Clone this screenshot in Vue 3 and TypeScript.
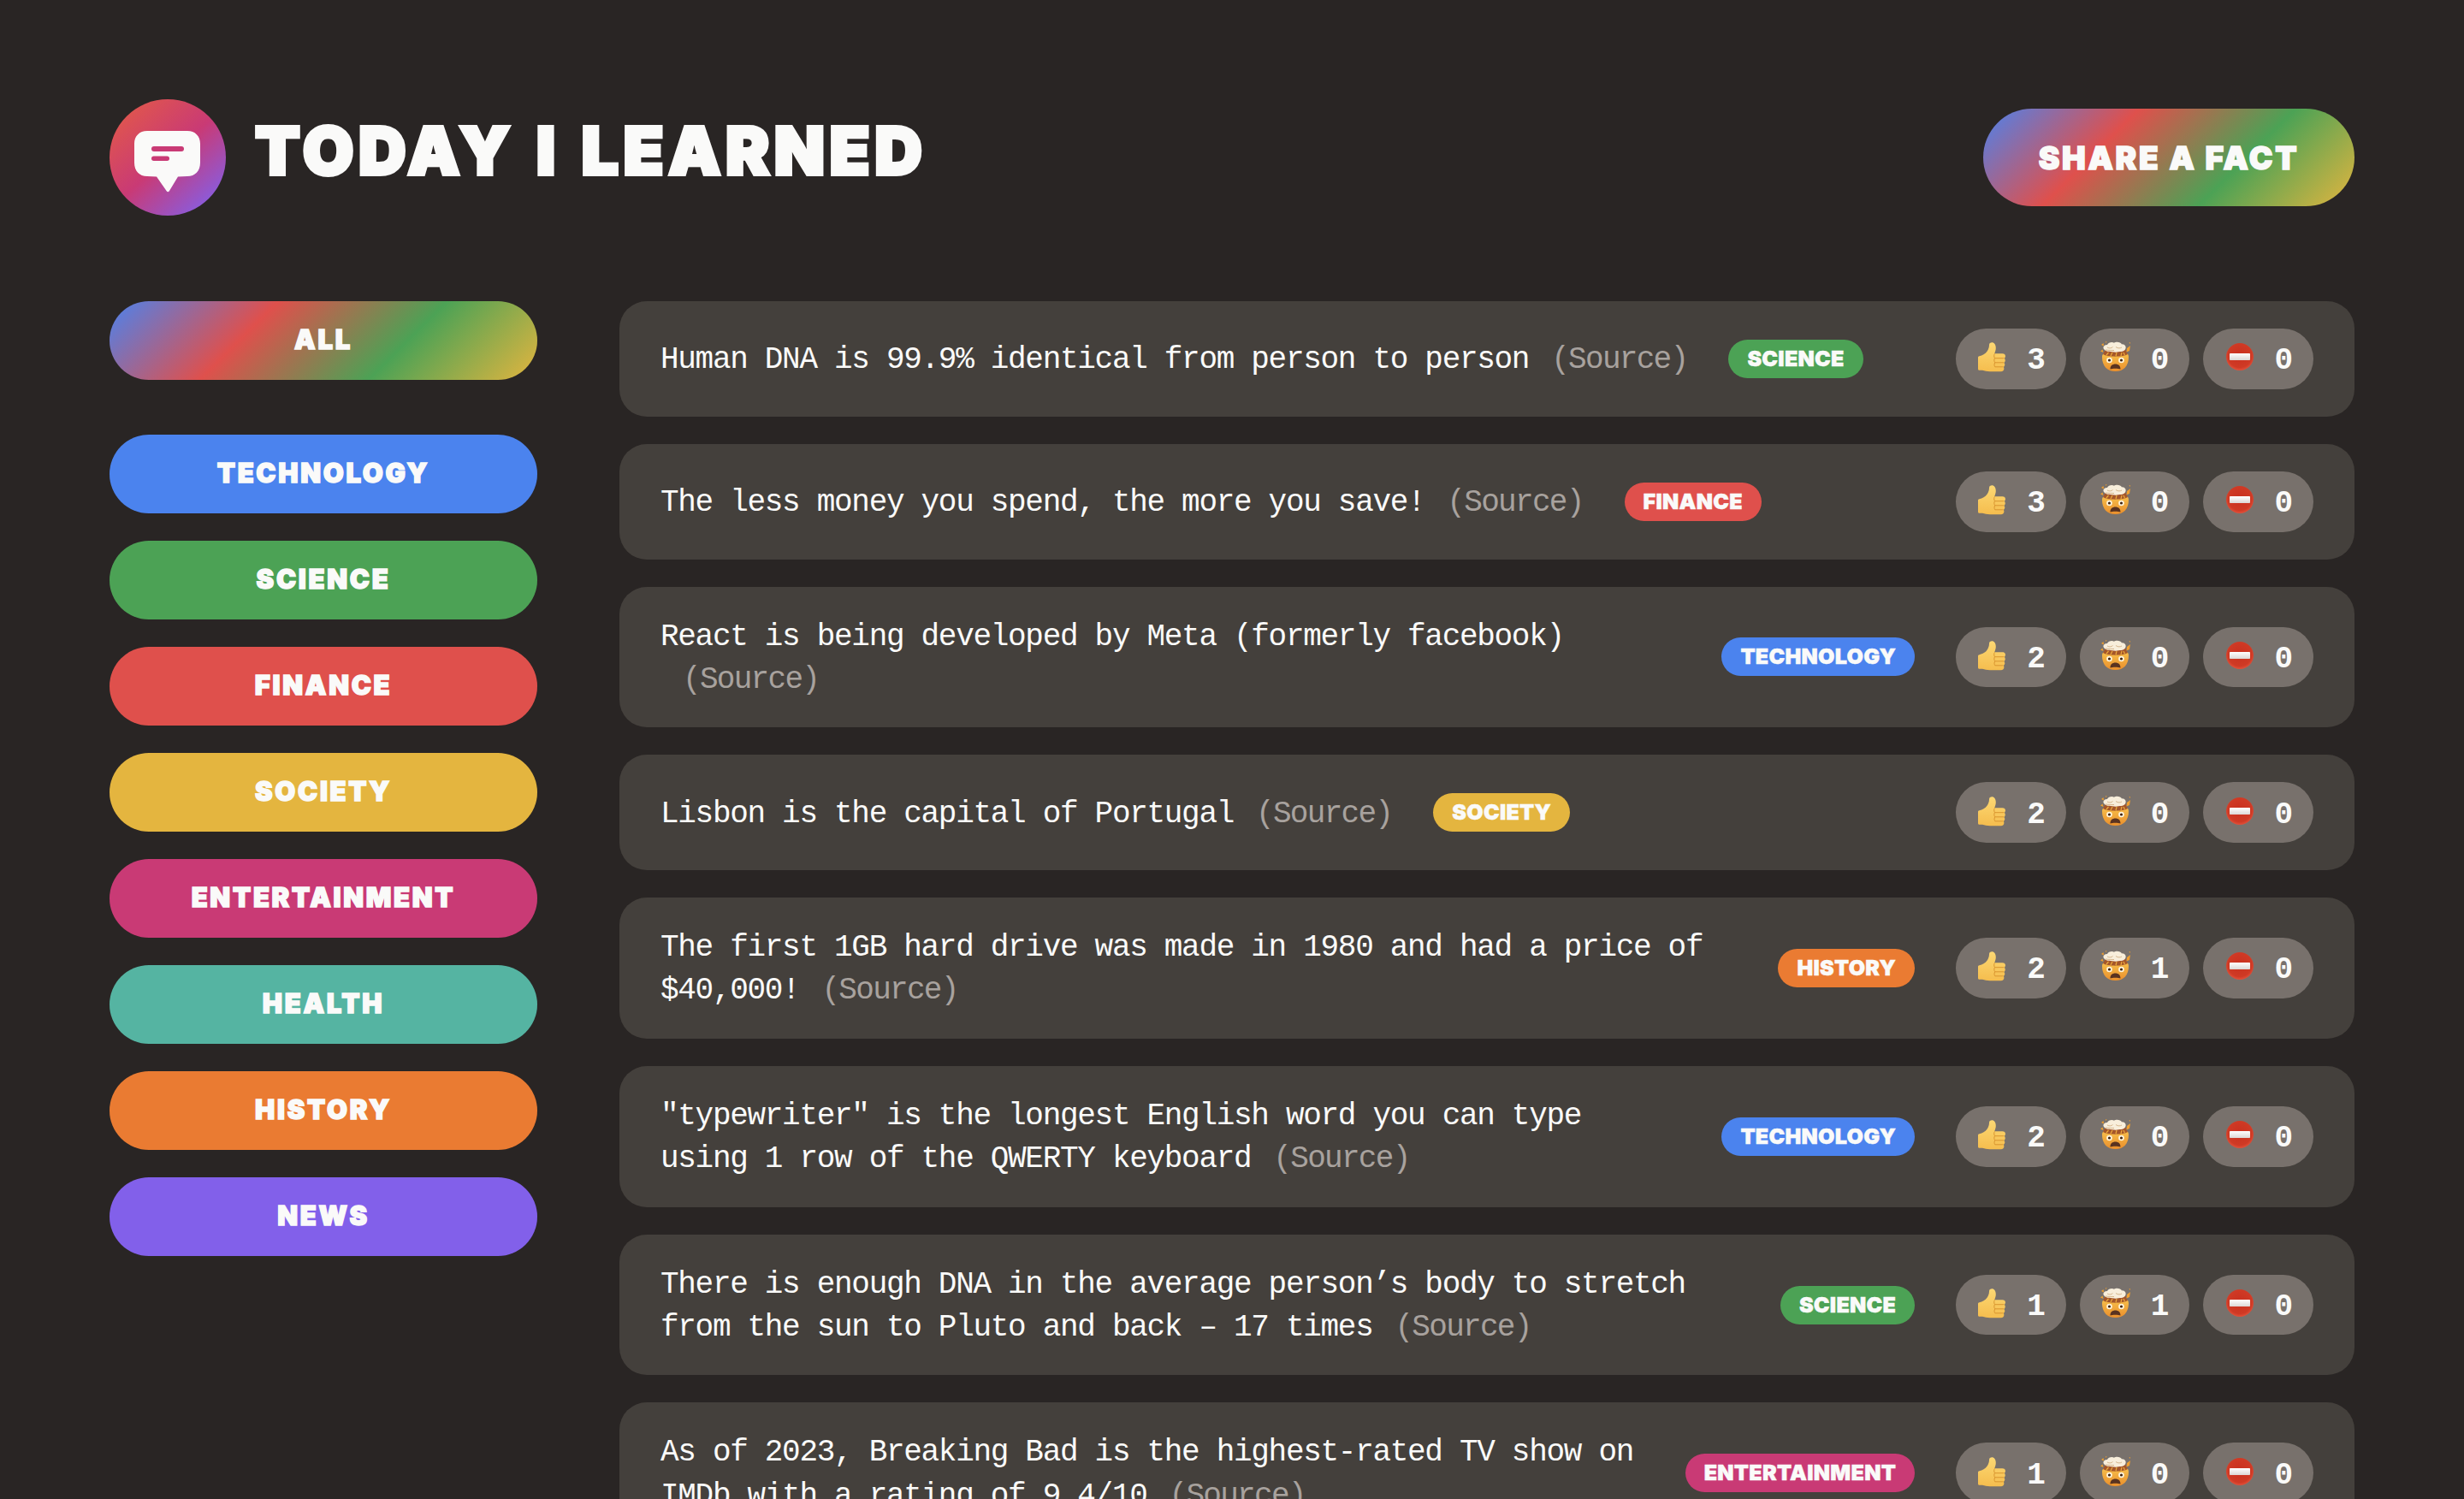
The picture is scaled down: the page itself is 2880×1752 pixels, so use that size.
<script setup lang="ts">
interface Fact {
  text: string
  category: string
  likes: number
  mindblown: number
  disputed: number
}

const CATEGORIES = [
  { name: 'technology', color: '#4b83ee' },
  { name: 'science', color: '#4ca255' },
  { name: 'finance', color: '#df504c' },
  { name: 'society', color: '#e4b53f' },
  { name: 'entertainment', color: '#c93a75' },
  { name: 'health', color: '#55b4a2' },
  { name: 'history', color: '#ea7b32' },
  { name: 'news', color: '#8260ea' },
]

const facts: Fact[] = [
  { text: 'Human DNA is 99.9% identical from person to person', category: 'science', likes: 3, mindblown: 0, disputed: 0 },
  { text: 'The less money you spend, the more you save!', category: 'finance', likes: 3, mindblown: 0, disputed: 0 },
  { text: 'React is being developed by Meta (formerly facebook)', category: 'technology', likes: 2, mindblown: 0, disputed: 0 },
  { text: 'Lisbon is the capital of Portugal', category: 'society', likes: 2, mindblown: 0, disputed: 0 },
  { text: 'The first 1GB hard drive was made in 1980 and had a price of $40,000!', category: 'history', likes: 2, mindblown: 1, disputed: 0 },
  { text: '"typewriter" is the longest English word you can type using 1 row of the QWERTY keyboard', category: 'technology', likes: 2, mindblown: 0, disputed: 0 },
  { text: 'There is enough DNA in the average person’s body to stretch from the sun to Pluto and back – 17 times', category: 'science', likes: 1, mindblown: 1, disputed: 0 },
  { text: 'As of 2023, Breaking Bad is the highest-rated TV show on IMDb with a rating of 9.4/10', category: 'entertainment', likes: 1, mindblown: 0, disputed: 0 },
]

function categoryColor(name: string) {
  return CATEGORIES.find((cat) => cat.name === name)?.color
}
</script>

<template>
  <div class="page">
    <header class="header">
      <div class="logo">
        <svg class="logo__icon" width="136" height="136" viewBox="0 0 136 136">
          <defs>
            <linearGradient id="logo-grad" x1="0.1" y1="0.05" x2="0.9" y2="0.95">
              <stop offset="0" stop-color="#e2584a" />
              <stop offset="0.5" stop-color="#c93a75" />
              <stop offset="1" stop-color="#8260ea" />
            </linearGradient>
          </defs>
          <circle cx="68" cy="68" r="68" fill="url(#logo-grad)" />
          <path
            d="M44 37H91C100 37 106 43 106 52V74C106 84 100 90 91 90L80 90.5L70 107C69 108.7 67.5 108.7 66.500 107L55 90.500L44 90C35 90 29 84 29 74V52C29 43 35 37 44 37Z"
            fill="#fafaf9"
          />
          <rect x="49" y="55" width="38" height="6" rx="3" fill="#c93a75" />
          <rect x="49" y="66.500" width="21" height="5.500" rx="2.750" fill="#c93a75" />
        </svg>
        <h1 class="logo__title">Today I Learned</h1>
      </div>
      <button class="btn btn--large">Share a fact</button>
    </header>

    <main class="main">
      <aside class="sidebar">
        <button class="btn btn--nav btn--all">All</button>
        <ul class="categories">
          <li v-for="cat in CATEGORIES" :key="cat.name">
            <button class="btn btn--nav" :style="{ backgroundColor: cat.color }">{{ cat.name }}</button>
          </li>
        </ul>
      </aside>

      <ul class="facts">
        <li v-for="fact in facts" :key="fact.text" class="fact">
          <p class="fact__text">{{ fact.text }}<a class="fact__source">(Source)</a></p>
          <span class="fact__tag" :style="{ backgroundColor: categoryColor(fact.category) }">{{ fact.category }}</span>
          <div class="votes">
            <button class="vote">
              <svg width="36" height="36" viewBox="-2 0.800 36 36">
                <defs>
                  <linearGradient id="thumb-grad" x1="0" y1="0" x2="0" y2="1">
                    <stop offset="0" stop-color="#fcd873" />
                    <stop offset="1" stop-color="#f5bd4e" />
                  </linearGradient>
                </defs>
                <path
                  d="M1.500 16C5 15 8.500 13.500 10.500 10.500C12.200 8 13 5.500 13 3C13 .8 14.600 0 16.200 0C18.800 0 20.800 2.600 20.800 6.500C20.800 8.800 20 11 19.200 13H28.500C30.600 13 32 14.200 32 16C32 17.200 31.400 18.100 30.600 18.600C31.400 19.200 31.800 20.100 31.800 21.100C31.800 22.300 31.200 23.200 30.300 23.700C31 24.300 31.300 25.100 31.300 26C31.300 27.200 30.600 28.100 29.700 28.600C30.200 29.200 30.400 29.800 30.400 30.500C30.400 32.500 29 34 26.800 34H14C10 34 8 33 5 32.500H1.500C.6 32.500 0 31.900 0 31V17.500C0 16.700 .6 16.200 1.500 16Z"
                  fill="url(#thumb-grad)"
                />
                <path
                  d="M19.500 18.500H30.300M19.800 23.600H30M19.800 28.600H29.400M19.500 13.200C18.600 14.500 18.400 16.500 19.500 18.500C18.600 20 18.600 22 19.800 23.600C18.800 25 18.800 27 19.800 28.600"
                  fill="none"
                  stroke="#d9952f"
                  stroke-width="1"
                />
              </svg>
              <span class="vote__count">{{ fact.likes }}</span>
            </button>
            <button class="vote">
              <svg width="36" height="36" viewBox="0 2 36 36">
                <defs>
                  <linearGradient id="head-grad" x1="0" y1="0" x2="0" y2="1">
                    <stop offset="0" stop-color="#f9c64f" />
                    <stop offset="1" stop-color="#ea8f2c" />
                  </linearGradient>
                </defs>
                <path d="M2 18C2 13 8 11 17.500 11C27 11 33 13 33 18C33 29 27 35 17.500 35C8 35 2 29 2 18Z" fill="url(#head-grad)" />
                <path d="M3 15C8 18.500 27 18.500 32 15L29 9.500H6Z" fill="#a4562a" />
                <path d="M7 16L9.500 13M12 17L14 13M18 17.500L19 13M24 17L25 13M28.500 16L27 13" stroke="#ecaa3c" stroke-width="1.200" />
                <path
                  d="M4.500 9.500C2 7 4.500 3.600 8 4C9 1.200 14 0 16 1.800C18.500 -.2 24 .8 25 3.400C28.500 3 31 6.500 29 9.500C27 13 22 11.500 18 12.800C13 11.500 7 13 4.500 9.500Z"
                  fill="#f8eedb"
                />
                <path d="M8 7C10.500 8.500 13 8 14.500 6.500M18 6.500C20.500 8.500 23.500 8 25 7M6 10C10 10.500 13 10.500 16 10.500" stroke="#d6b68c" stroke-width="1" fill="none" />
                <path d="M1 4L3.500 2L4 5.500ZM31 8L35 5L34 11L30.500 12.500ZM0 11.500L2.500 9.500L3.500 13ZM33.500 1.500L35 1L34.500 3ZM6 0L7.500 .5L6.500 2Z" fill="#ef9f2f" />
                <circle cx="10.500" cy="22" r="3.300" fill="#fff6df" />
                <circle cx="24.500" cy="22" r="3.300" fill="#fff6df" />
                <circle cx="10.500" cy="22" r="1.600" fill="#3f2414" />
                <circle cx="24.500" cy="22" r="1.600" fill="#3f2414" />
                <path d="M11.500 32.500C11.500 28.500 14 26.500 17.500 26.500C21 26.500 23.500 28.500 23.500 32.500C21 31.400 14 31.400 11.500 32.500Z" fill="#5a3320" />
              </svg>
              <span class="vote__count">{{ fact.mindblown }}</span>
            </button>
            <button class="vote">
              <svg width="36" height="36" viewBox="0 0 36 36">
                <defs>
                  <radialGradient id="stop-grad" cx="0.5" cy="0.45" r="0.55">
                    <stop offset="0" stop-color="#c9301f" />
                    <stop offset="0.8" stop-color="#cf3a25" />
                    <stop offset="1" stop-color="#e2503a" />
                  </radialGradient>
                  <linearGradient id="bar-grad" x1="0" y1="0" x2="0" y2="1">
                    <stop offset="0" stop-color="#ffffff" />
                    <stop offset="1" stop-color="#dcd8d6" />
                  </linearGradient>
                </defs>
                <circle cx="19" cy="16" r="16" fill="url(#stop-grad)" />
                <rect x="7" y="12" width="24" height="8" rx="0.800" fill="url(#bar-grad)" />
              </svg>
              <span class="vote__count">{{ fact.disputed }}</span>
            </button>
          </div>
        </li>
      </ul>
    </main>
  </div>
</template>

<style>
html,
body {
  margin: 0;
  background-color: #292524;
}
</style>

<style scoped>
* {
  box-sizing: border-box;
}

.page {
  height: 100vh;
  overflow: hidden;
  padding: 116px 128px 0;
  color: #fafaf9;
  font-family: "Liberation Mono", monospace;
}

.header {
  display: flex;
  align-items: center;
  justify-content: space-between;
  margin-bottom: 100px;
}

.logo {
  display: flex;
  align-items: center;
  gap: 34px;
}

.logo__icon {
  display: block;
}

.logo__title {
  margin: -16px 0 0;
  font-family: Inter, sans-serif;
  font-size: 77px;
  font-weight: 900;
  line-height: 1;
  letter-spacing: 5.5px;
  word-spacing: 4px;
  text-transform: uppercase;
  -webkit-text-stroke: 4px #fafaf9;
}

.btn {
  border: none;
  color: #fafaf9;
  font-family: Inter, sans-serif;
  font-weight: 900;
  text-transform: uppercase;
  border-radius: 200px;
  background-image: linear-gradient(135deg, #4b83ee, #df504c, #4ca255, #e4b53f);
  -webkit-text-stroke: 1.5px #fafaf9;
}

.btn--large {
  width: 434px;
  height: 114px;
  font-size: 37px;
  letter-spacing: 2.7px;
}

.btn--nav {
  display: block;
  width: 100%;
  height: 92px;
  padding: 0 0 3px;
  font-size: 31px;
  letter-spacing: 2.7px;
  background-image: none;
}

.btn--all {
  margin-bottom: 64px;
  background-image: linear-gradient(135deg, #4b83ee, #df504c, #4ca255, #e4b53f);
}

.main {
  display: grid;
  grid-template-columns: 500px 1fr;
  column-gap: 96px;
  align-items: start;
}

.categories,
.facts {
  list-style: none;
  margin: 0;
  padding: 0;
  display: flex;
  flex-direction: column;
  gap: 32px;
}

.fact {
  display: flex;
  align-items: center;
  gap: 48px;
  padding: 32px 48px;
  background-color: #44403c;
  border-radius: 32px;
  font-size: 36px;
  line-height: 1.4;
  letter-spacing: -1.3px;
}

.fact__text {
  margin: 2px 0 -2px;
}

.fact__source {
  margin-left: 26px;
  color: #a8a29e;
  letter-spacing: -1.7px;
}

.fact__tag {
  margin-right: auto;
  flex-shrink: 0;
  padding: 0 22px;
  height: 45px;
  display: flex;
  align-items: center;
  border-radius: 200px;
  font-family: Inter, sans-serif;
  font-size: 25px;
  font-weight: 900;
  letter-spacing: 0.3px;
  line-height: 1;
  text-transform: uppercase;
  -webkit-text-stroke: 0.5px #fafaf9;
}

.votes {
  display: flex;
  flex-shrink: 0;
  gap: 16px;
}

.vote {
  display: flex;
  align-items: center;
  gap: 23px;
  padding: 10.2px 24px;
  border: none;
  border-radius: 200px;
  background-color: #78716c;
  color: #fafaf9;
  font-family: "Liberation Mono", monospace;
  font-size: 36px;
  font-weight: 700;
  line-height: 1.4;
}

.vote__count {
  margin: 3px 0 -3px;
}

.vote svg {
  display: block;
  flex-shrink: 0;
  overflow: visible;
}
</style>
